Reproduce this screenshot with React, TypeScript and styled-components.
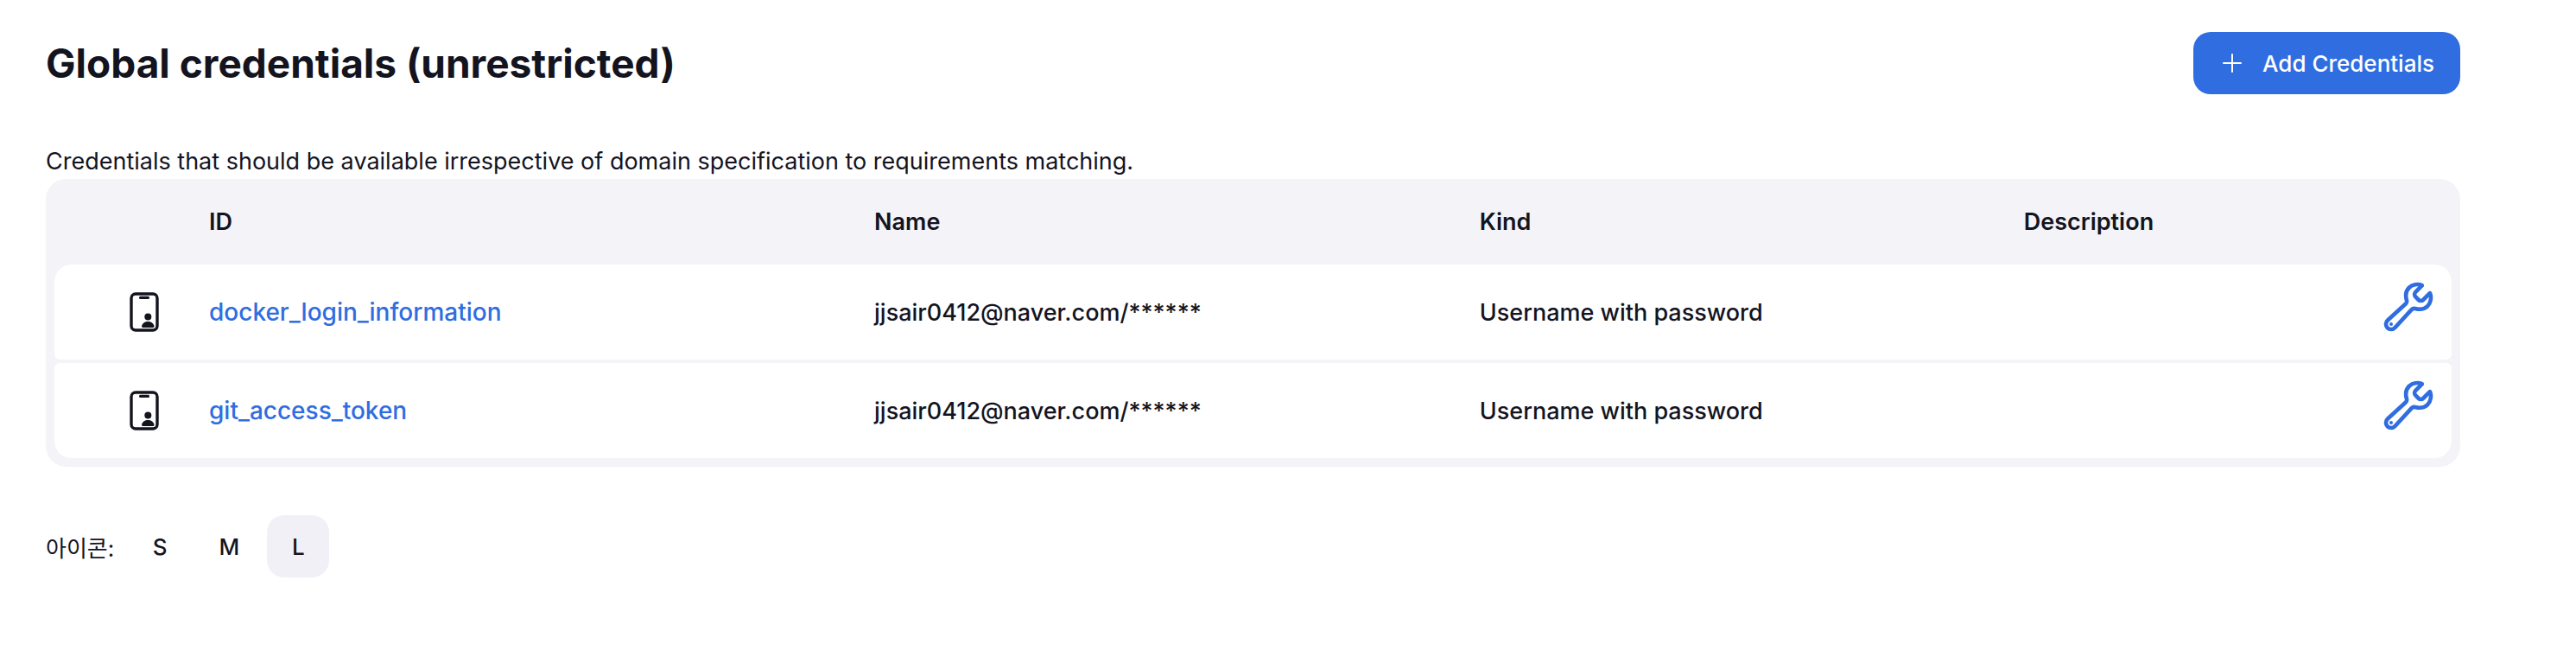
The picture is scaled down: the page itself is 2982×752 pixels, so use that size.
import React, { useState } from "react";
import styled, { createGlobalStyle } from "styled-components";
import { IoBuildOutline } from "react-icons/io5";

const GlobalStyle = createGlobalStyle`
  *, *::before, *::after { box-sizing: border-box; }
  body {
    margin: 0;
    background: #fff;
    color: #14141f;
    font-family: Inter, "Noto Sans CJK KR", sans-serif;
    font-size: 27px;
  }
`;

const Page = styled.main`
  padding: 37px 134px 84px 53px;
`;

const AppBar = styled.header`
  display: flex;
  align-items: center;
  justify-content: space-between;
`;

const Title = styled.h1`
  margin: 0;
  font-size: 46px;
  line-height: 56px;
  font-weight: 700;
`;

const Button = styled.button`
  height: 72px;
  border: 0;
  border-radius: 20px;
  font-family: inherit;
  font-size: 26px;
  font-weight: 500;
  cursor: pointer;
`;

const PrimaryButton = styled(Button)`
  display: flex;
  align-items: center;
  gap: 24px;
  padding: 0 30px 0 34px;
  background: #2f6de0;
  color: #fff;
`;

const Intro = styled.p`
  margin: 58px 0 0;
  line-height: 40px;
`;

const TablePanel = styled.div`
  padding: 0 10px 6px;
  border-radius: 24px;
  background: #f3f3f8;
`;

const Table = styled.table`
  width: 100%;
  table-layout: fixed;
  border-collapse: separate;
  border-spacing: 0 4px;
`;

const Column = styled.col<{ $width?: string }>`
  width: ${(p) => p.$width ?? "auto"};
`;

const HeadCell = styled.th`
  height: 91px;
  padding: 0 28px;
  text-align: left;
  font-weight: 600;
`;

const Row = styled.tr`
  &:first-child > td:first-child { border-top-left-radius: 20px; }
  &:first-child > td:last-child { border-top-right-radius: 20px; }
  &:last-child > td:first-child { border-bottom-left-radius: 20px; }
  &:last-child > td:last-child { border-bottom-right-radius: 20px; }
`;

const Cell = styled.td`
  height: 110px;
  padding: 0 28px;
  background: #fff;
  font-weight: 500;
  vertical-align: middle;
  &:first-child { border-radius: 6px 0 0 6px; }
  &:last-child { border-radius: 0 6px 6px 0; }
`;

const IconCell = styled(Cell)`
  padding: 0 0 0 80px;
`;

const ActionCell = styled(Cell)`
  padding: 0 18px 12px 0;
`;

const CredentialLink = styled.a`
  color: #2f6de0;
  font-size: 28px;
  text-decoration: none;
`;

const ActionLink = styled.a`
  display: flex;
  justify-content: flex-end;
  color: #2f6de0;
`;

const WrenchIcon = styled(IoBuildOutline)`
  width: 64px;
  height: 64px;
  path { stroke-width: 37; }
`;

const CredentialGlyph = styled.svg`
  display: block;
  width: 48px;
  height: 48px;
`;

const SizeBar = styled.div`
  display: flex;
  align-items: center;
  gap: 8px;
  margin-top: 56px;
  font-size: 26px;
`;

const SizeLabel = styled.span`
  margin-right: 9px;
`;

const SizeButton = styled(Button)<{ $active: boolean }>`
  width: 72px;
  padding: 0;
  background: ${(p) => (p.$active ? "#f0f0f6" : "transparent")};
  color: #14141f;
`;

const CredentialIcon = () => (
  <CredentialGlyph viewBox="0 0 48 48" aria-hidden="true">
    <rect x="9" y="3" width="30" height="42" rx="5" fill="none" stroke="#14141f" strokeWidth="3.4" />
    <rect x="18" y="5.8" width="12" height="3.2" rx="1.5" fill="#14141f" />
    <circle cx="28.3" cy="29.4" r="4" fill="#14141f" />
    <path d="M22.4 42c-1 0-1.5-.8-1.3-1.7.6-3.4 3.9-5.3 7.2-5.3s6.6 1.9 7.2 5.3c.2.9-.3 1.7-1.3 1.7z" fill="#14141f" />
  </CredentialGlyph>
);

const PlusIcon = () => (
  <svg width="22" height="22" viewBox="0 0 22 22" aria-hidden="true">
    <path d="M11 1v20M1 11h20" fill="none" stroke="currentColor" strokeWidth="2" strokeLinecap="round" />
  </svg>
);

const credentials = [
  { id: "docker_login_information", name: "jjsair0412@naver.com/******", kind: "Username with password" },
  { id: "git_access_token", name: "jjsair0412@naver.com/******", kind: "Username with password" },
];

const sizes = ["S", "M", "L"];

export default function App() {
  const [size, setSize] = useState("L");

  return (
    <>
      <GlobalStyle />
      <Page>
        <AppBar>
          <Title>Global credentials (unrestricted)</Title>
          <PrimaryButton type="button">
            <PlusIcon />
            Add Credentials
          </PrimaryButton>
        </AppBar>
        <Intro>
          Credentials that should be available irrespective of domain specification to requirements matching.
        </Intro>
        <TablePanel>
          <Table>
            <colgroup>
              <Column $width="151px" />
              <Column $width="27.75%" />
              <Column $width="25.25%" />
              <Column $width="22.7%" />
              <Column />
              <Column $width="120px" />
            </colgroup>
            <thead>
              <tr>
                <HeadCell as="td" />
                <HeadCell scope="col">ID</HeadCell>
                <HeadCell scope="col">Name</HeadCell>
                <HeadCell scope="col">Kind</HeadCell>
                <HeadCell scope="col">Description</HeadCell>
                <HeadCell as="td" />
              </tr>
            </thead>
            <tbody>
              {credentials.map((c) => (
                <Row key={c.id}>
                  <IconCell><CredentialIcon /></IconCell>
                  <Cell><CredentialLink href={`#${c.id}`}>{c.id}</CredentialLink></Cell>
                  <Cell>{c.name}</Cell>
                  <Cell>{c.kind}</Cell>
                  <Cell />
                  <ActionCell>
                    <ActionLink href={`#${c.id}/update`} aria-label={`Update ${c.id}`}>
                      <WrenchIcon />
                    </ActionLink>
                  </ActionCell>
                </Row>
              ))}
            </tbody>
          </Table>
        </TablePanel>
        <SizeBar role="group" aria-labelledby="icon-size">
          <SizeLabel id="icon-size">아이콘:</SizeLabel>
          {sizes.map((s) => (
            <SizeButton key={s} type="button" $active={s === size} aria-pressed={s === size} onClick={() => setSize(s)}>
              {s}
            </SizeButton>
          ))}
        </SizeBar>
      </Page>
    </>
  );
}
